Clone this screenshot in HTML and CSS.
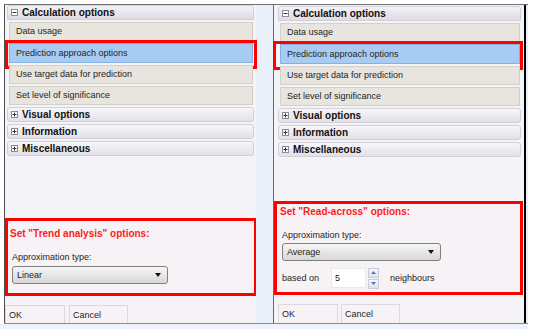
FILE: index.html
```html
<!DOCTYPE html>
<html lang="en">
<head>
    <meta charset="UTF-8">
    <title>Prediction approach options</title>
    <link rel="stylesheet" href="styles.css">
</head>
<body>

    <div class="frame">
        <!-- Trend analysis dialog -->
        <section class="panel panel-left">
            <div class="tree">
                <div class="group">
                    <svg class="toggle" width="7" height="7" viewBox="0 0 7 7"><rect x="0.5" y="0.5" width="6" height="6" fill="#fff" stroke="#8c8c96"/><path d="M1.5 3.5h4" stroke="#333"/></svg>
                    Calculation options
                </div>
                <div class="item">Data usage</div>
                <div class="item selected marked">Prediction approach options</div>
                <div class="item">Use target data for prediction</div>
                <div class="item">Set level of significance</div>
                <div class="group closed">
                    <svg class="toggle" width="7" height="7" viewBox="0 0 7 7"><rect x="0.5" y="0.5" width="6" height="6" fill="#fff" stroke="#8c8c96"/><path d="M1.5 3.5h4M3.5 1.5v4" stroke="#333"/></svg>
                    Visual options
                </div>
                <div class="group closed">
                    <svg class="toggle" width="7" height="7" viewBox="0 0 7 7"><rect x="0.5" y="0.5" width="6" height="6" fill="#fff" stroke="#8c8c96"/><path d="M1.5 3.5h4M3.5 1.5v4" stroke="#333"/></svg>
                    Information
                </div>
                <div class="group closed">
                    <svg class="toggle" width="7" height="7" viewBox="0 0 7 7"><rect x="0.5" y="0.5" width="6" height="6" fill="#fff" stroke="#8c8c96"/><path d="M1.5 3.5h4M3.5 1.5v4" stroke="#333"/></svg>
                    Miscellaneous
                </div>
            </div>

            <div class="options-box">
                <h3>Set "Trend analysis" options:</h3>
                <div class="field-label">Approximation type:</div>
                <div class="combo">Linear<span class="combo-arrow"></span></div>
            </div>

            <div class="buttons">
                <button class="btn">OK</button>
                <button class="btn">Cancel</button>
            </div>
        </section>

        <div class="separator"></div>

        <!-- Read-across dialog -->
        <section class="panel panel-right">
            <div class="tree">
                <div class="group">
                    <svg class="toggle" width="7" height="7" viewBox="0 0 7 7"><rect x="0.5" y="0.5" width="6" height="6" fill="#fff" stroke="#8c8c96"/><path d="M1.5 3.5h4" stroke="#333"/></svg>
                    Calculation options
                </div>
                <div class="item">Data usage</div>
                <div class="item selected marked">Prediction approach options</div>
                <div class="item">Use target data for prediction</div>
                <div class="item">Set level of significance</div>
                <div class="group closed">
                    <svg class="toggle" width="7" height="7" viewBox="0 0 7 7"><rect x="0.5" y="0.5" width="6" height="6" fill="#fff" stroke="#8c8c96"/><path d="M1.5 3.5h4M3.5 1.5v4" stroke="#333"/></svg>
                    Visual options
                </div>
                <div class="group closed">
                    <svg class="toggle" width="7" height="7" viewBox="0 0 7 7"><rect x="0.5" y="0.5" width="6" height="6" fill="#fff" stroke="#8c8c96"/><path d="M1.5 3.5h4M3.5 1.5v4" stroke="#333"/></svg>
                    Information
                </div>
                <div class="group closed">
                    <svg class="toggle" width="7" height="7" viewBox="0 0 7 7"><rect x="0.5" y="0.5" width="6" height="6" fill="#fff" stroke="#8c8c96"/><path d="M1.5 3.5h4M3.5 1.5v4" stroke="#333"/></svg>
                    Miscellaneous
                </div>
            </div>

            <div class="options-box">
                <h3>Set "Read-across" options:</h3>
                <div class="field-label">Approximation type:</div>
                <div class="combo">Average<span class="combo-arrow"></span></div>
                <div class="spin-row">
                    <span>based on</span>
                    <span class="spin-input">5</span>
                    <span class="spin-buttons">
                        <span class="spin-btn"><svg width="5" height="3" viewBox="0 0 5 3"><path d="M0 3L2.5 0L5 3Z" fill="#4a78c0"/></svg></span>
                        <span class="spin-btn"><svg width="5" height="3" viewBox="0 0 5 3"><path d="M0 0L2.5 3L5 0Z" fill="#4a78c0"/></svg></span>
                    </span>
                    <span class="spin-unit">neighbours</span>
                </div>
            </div>

            <div class="buttons">
                <button class="btn">OK</button>
                <button class="btn">Cancel</button>
            </div>
        </section>
    </div>
    <div class="under-strip"></div>

</body>
</html>
```

FILE: styles.css
```css
/* Page */
body {
    margin: 0;
    background-color: #ffffff;
    font-family: 'Liberation Sans', Arial, sans-serif;
    font-size: 9px;
    color: #1e1e1e;
}

/* Outer frame holding both dialogs */
.frame {
    display: flex;
    margin: 4px 0 0 4px;
    width: 524px;
    height: 318px;
    border-top: 1px solid #707070;
    border-bottom: 1px solid #8a8a8a;
    background-color: #eaf0fa;
}

.under-strip {
    width: 528px;
    height: 5px;
    background-color: #edf2fb;
}

.panel {
    display: flex;
    flex-direction: column;
    background-color: #f6f3f7;
}

.panel-left {
    width: 251px;
    border-left: 1px solid #4e4e4e;
}

.panel-right {
    width: 250px;
    border-left: 1px solid #6a6a6a;
    border-right: 2px solid #000000;
}

.separator {
    width: 17px;
    background-color: #eaf0fa;
}

/* Tree / navigation list */
.tree {
    flex: 1;
    background-color: #f4f3f8;
}

.panel-right .tree {
    padding-top: 1px;
}

.group {
    display: flex;
    align-items: center;
    gap: 4px;
    height: 13px;
    margin: 2px 2px 0 2px;
    padding-left: 3px;
    border: 1px solid #d2cfd6;
    border-radius: 3px;
    background: linear-gradient(#f3f2f6, #dedbe2);
    font-weight: bold;
    font-size: 10px;
    color: #111;
}

.group:first-child {
    margin-top: 0;
    border-radius: 3px 3px 0 0;
}

.group.closed {
    background: linear-gradient(#f7f6fa, #e3e1e7);
}

.panel-right .group {
    margin-left: 4px;
    margin-right: 3px;
}

.toggle {
    flex: none;
}

.item {
    position: relative;
    height: 17px;
    line-height: 17px;
    margin: 2px 3px 0 4px;
    padding-left: 6px;
    border: 1px solid #d3cfc9;
    background-color: #e8e4de;
}

.panel-right .item {
    margin-left: 6px;
    margin-right: 4px;
}

.item.selected {
    height: 18px;
    line-height: 18px;
    border-color: #86b0e2;
    background-color: #a8cbf3;
}

/* Red annotation frame drawn over the highlighted row */
.item.marked::after {
    content: "";
    position: absolute;
    top: -4px;
    bottom: -7px;
    left: -5px;
    right: -5px;
    border: 3px solid #ff0000;
}

.panel-right .item.marked::after {
    left: -8px;
    right: -4px;
}

/* Option box with the red annotation border */
.options-box {
    border: 3px solid #ff0000;
    padding: 7px 4px 9px 4px;
    background-color: #f7f2f6;
}

.panel-left .options-box {
    margin-right: -1px;
}

.panel-right .options-box {
    padding: 2px 5px 4px 5px;
    margin-right: 1px;
}

.options-box h3 {
    margin: 0 0 11px -2px;
    font-size: 10px;
    line-height: 12px;
    color: #ff1a1a;
}

.field-label {
    line-height: 12px;
    margin-bottom: 3px;
}

.panel-right .field-label {
    margin-bottom: 2px;
}

.combo {
    position: relative;
    width: 150px;
    height: 16px;
    line-height: 16px;
    padding-left: 4px;
    border: 1px solid #7f7f7f;
    border-radius: 3px;
    background: linear-gradient(#f6f6f6, #e6e6e6 50%, #d8d8d8);
    font-size: 9px;
}

.panel-right .combo {
    width: 153px;
    padding-left: 4px;
}

.combo-arrow {
    position: absolute;
    right: 6px;
    top: 6px;
    border-left: 3px solid transparent;
    border-right: 3px solid transparent;
    border-top: 4px solid #111;
}

/* Spin edit row */
.spin-row {
    display: flex;
    align-items: center;
    height: 20px;
    margin-top: 7px;
}

.spin-input {
    width: 30px;
    height: 18px;
    line-height: 18px;
    margin-left: 12px;
    padding-left: 3px;
    background-color: #ffffff;
    border: 1px solid #ece9ee;
}

.spin-buttons {
    display: flex;
    flex-direction: column;
    gap: 1px;
    margin-left: 2px;
}

.spin-btn {
    display: flex;
    align-items: center;
    justify-content: center;
    width: 9px;
    height: 8px;
    border: 1px solid #c7cdd8;
    background: linear-gradient(#f7f8fb, #dfe3ea);
}

.spin-unit {
    margin-left: 11px;
}

/* Dialog buttons */
.buttons {
    display: flex;
    gap: 4px;
    margin-top: 9px;
    height: 18px;
}

.panel-right .buttons {
    margin-left: 4px;
    gap: 3px;
    height: 19px;
}

.btn {
    width: 60px;
    height: 100%;
    padding: 0 0 0 3px;
    text-align: left;
    border: 1px solid #dcd8dd;
    border-bottom: none;
    background-color: #f6f2f6;
    font-family: 'Liberation Sans', Arial, sans-serif;
    font-size: 9px;
    color: #1e1e1e;
}

.btn + .btn {
    width: 59px;
}
```
